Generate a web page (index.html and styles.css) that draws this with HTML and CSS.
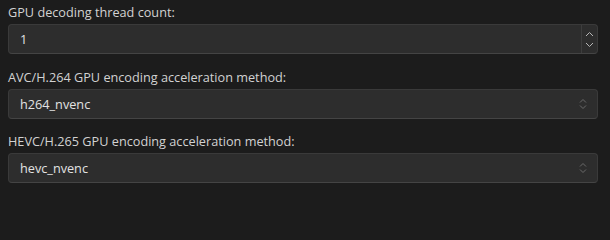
FILE: index.html
```html
<!DOCTYPE html>
<html lang="en">
<head>
<meta charset="utf-8">
<title>GPU settings</title>
<link rel="stylesheet" href="styles.css">
</head>
<body>
<div class="form">
  <div class="field">
    <label class="label">GPU decoding thread count:</label>
    <div class="box spin">
      <span class="value">1</span>
      <div class="spin-buttons">
        <svg class="chev" width="9" height="6" viewBox="0 0 9 6"><path d="M1 5 L4.5 1.5 L8 5" fill="none" stroke="#b5b5b5" stroke-width="1"/></svg>
        <svg class="chev" width="9" height="6" viewBox="0 0 9 6"><path d="M1 1 L4.5 4.5 L8 1" fill="none" stroke="#b5b5b5" stroke-width="1"/></svg>
      </div>
    </div>
  </div>
  <div class="field">
    <label class="label">AVC/H.264 GPU encoding acceleration method:</label>
    <div class="box select">
      <span class="value">h264_nvenc</span>
      <svg class="updown" width="8" height="12" viewBox="0 0 8 12"><path d="M1 4.5 L4 1.5 L7 4.5 M1 7.5 L4 10.5 L7 7.5" fill="none" stroke="#6a6a6a" stroke-width="1"/></svg>
    </div>
  </div>
  <div class="field">
    <label class="label">HEVC/H.265 GPU encoding acceleration method:</label>
    <div class="box select">
      <span class="value">hevc_nvenc</span>
      <svg class="updown" width="8" height="12" viewBox="0 0 8 12"><path d="M1 4.5 L4 1.5 L7 4.5 M1 7.5 L4 10.5 L7 7.5" fill="none" stroke="#6a6a6a" stroke-width="1"/></svg>
    </div>
  </div>
</div>
</body>
</html>
```
FILE: styles.css
```css
html, body {
  margin: 0;
  padding: 0;
  background: #1c1c1c;
  height: 100%;
}
body {
  font-family: "Open Sans", "Noto Sans", "Liberation Sans", sans-serif;
  font-size: 12.7px;
  color: #d4d4d4;
}
.form {
  display: flex;
  flex-direction: column;
  gap: 14.5px;
  padding: 4px 12px 0 8px;
}
.field {
  display: flex;
  flex-direction: column;
  gap: 3px;
}
.label {
  display: block;
  height: 17px;
  line-height: 17px;
  color: #d2d2d2;
}
.box {
  box-sizing: border-box;
  height: 30px;
  display: flex;
  align-items: center;
  background: #2d2d2d;
  border: 1px solid #3a3a3a;
  border-bottom-color: #444;
  border-radius: 4px;
  color: #e2e2e2;
}
.value {
  flex: 1;
  padding-left: 11px;
}
.spin-buttons {
  align-self: stretch;
  width: 16px;
  border-left: 1px solid #3d3d3d;
  display: flex;
  flex-direction: column;
  align-items: center;
  justify-content: space-between;
  padding: 6px 0 5px;
  box-sizing: border-box;
}
.chev {
  display: block;
}
.updown {
  margin-right: 10px;
}
```
